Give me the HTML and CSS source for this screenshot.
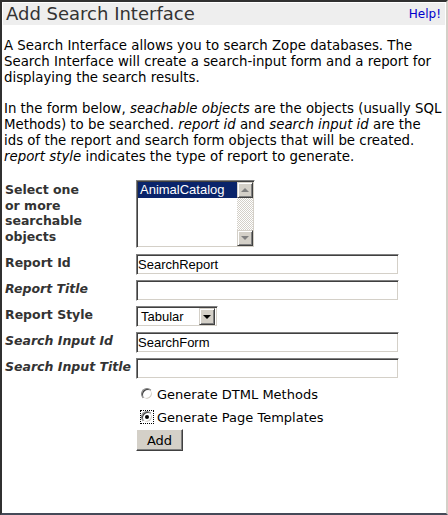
FILE: index.html
```html
<!DOCTYPE html>
<html>
<head>
<meta charset="utf-8">
<title>Add Search Interface</title>
<link rel="stylesheet" href="styles.css">
</head>
<body>
<div class="frame">
  <div class="titlebar">
    <span class="title">Add Search Interface</span>
    <a class="help" href="#">Help!</a>
  </div>
  <p class="intro">A Search Interface allows you to search Zope databases. The<br>Search Interface will create a search-input form and a report for<br>displaying the search results.</p>
  <p class="intro">In the form below, <em>seachable objects</em> are the objects (usually SQL<br>Methods) to be searched. <em>report id</em> and <em>search input id</em> are the<br>ids of the report and search form objects that will be created.<br><em>report style</em> indicates the type of report to generate.</p>
  <form class="form">
    <div class="label top">Select one<br>or more<br>searchable<br>objects</div>
    <div class="listbox">
      <div class="options"><div class="option sel">AnimalCatalog</div></div>
      <div class="vscroll">
        <div class="sbtn"><span class="arr up"></span></div>
        <div class="track"></div>
        <div class="sbtn"><span class="arr down"></span></div>
      </div>
    </div>

    <div class="label">Report Id</div>
    <input class="field" type="text" value="SearchReport">

    <div class="label opt">Report Title</div>
    <input class="field" type="text" value="">

    <div class="label">Report Style</div>
    <div class="dropdown"><span class="dd-text">Tabular</span><span class="dd-btn"><span class="arr down dark"></span></span></div>

    <div class="label opt">Search Input Id</div>
    <input class="field" type="text" value="SearchForm">

    <div class="label opt">Search Input Title</div>
    <input class="field" type="text" value="">

    <div class="choices">
      <div class="choice"><span class="rwrap"><span class="radio"></span></span><span>Generate DTML Methods</span></div>
      <div class="choice"><span class="rwrap focus"><span class="radio on"></span></span><span>Generate Page Templates</span></div>
      <div class="add">Add</div>
    </div>
  </form>
</div>
</body>
</html>
```

FILE: styles.css
```css
* { box-sizing: border-box; }
html, body { margin: 0; padding: 0; background: #fff; }
body {
  font-family: "DejaVu Sans", Verdana, sans-serif;
  font-size: 13.33px;
  color: #000;
}
.frame {
  height: 515px;
  border-style: solid;
  border-width: 2px;
  border-color: #303030 #d4d0c8 #454a58 #303030;
  padding: 1px;
  overflow: hidden;
}
.titlebar {
  display: flex;
  justify-content: space-between;
  align-items: flex-start;
  height: 22px;
  background: #eeeeee;
  padding: 0 4px 0 3px;
}
.title {
  font-size: 18px;
  line-height: 22px;
  color: #333;
}
.help {
  font-size: 12px;
  line-height: 15px;
  margin-top: 4px;
  color: #0000cc;
  text-decoration: none;
}
.intro {
  margin: 13px 0 0;
  padding: 0 0 0 1px;
  line-height: 16px;
  white-space: nowrap;
}
.intro + .intro { margin-top: 15px; }
.intro em { font-style: italic; }

.form {
  margin: 15px 0 0;
  padding-left: 2px;
  display: grid;
  grid-template-columns: 131px 263px;
  row-gap: 5px;
  align-items: center;
}
.label {
  font-weight: bold;
  font-size: 12.5px;
  line-height: 15.7px;
  color: #333;
  white-space: nowrap;
  padding-bottom: 3px;
}
.label.top { align-self: start; padding-top: 2px; padding-bottom: 0; }
.label.opt { font-style: italic; }

.field {
  display: block;
  width: 263px;
  height: 21px;
  margin: 0;
  padding: 0 1px;
  border: 1px solid;
  border-color: #808080 #fff #fff #808080;
  box-shadow: inset 1px 1px #404040, inset -1px -1px #d4d0c8;
  background: #fff;
  font: 13px "Liberation Sans", Arial, sans-serif;
  color: #000;
  outline: none;
}

.listbox {
  width: 119px;
  height: 68px;
  margin-bottom: 1px;
  border: 1px solid;
  border-color: #808080 #fff #fff #808080;
  box-shadow: inset 1px 1px #404040, inset -1px -1px #d4d0c8;
  padding: 1px;
  display: flex;
  background: #fff;
}
.options { flex: 1; }
.option {
  font: 13px "Liberation Sans", Arial, sans-serif;
  line-height: 16px;
  padding-left: 2px;
}
.option.sel { background: #0a246a; color: #fff; }
.vscroll {
  width: 16px;
  display: flex;
  flex-direction: column;
}
.track {
  flex: 1;
  background: repeating-conic-gradient(#d4d0c8 0 25%, #fff 0 50%) 0 0 / 2px 2px;
}
.sbtn, .dd-btn {
  width: 16px;
  height: 16px;
  background: #d4d0c8;
  border: 1px solid;
  border-color: #d4d0c8 #404040 #404040 #d4d0c8;
  box-shadow: inset 1px 1px #fff, inset -1px -1px #808080;
  display: flex;
  align-items: center;
  justify-content: center;
}
.arr {
  width: 0;
  height: 0;
  border-left: 4px solid transparent;
  border-right: 4px solid transparent;
}
.arr.up { border-bottom: 4px solid #808080; }
.arr.down { border-top: 4px solid #808080; }
.arr.down.dark { border-top-color: #000; }

.dropdown {
  width: 82px;
  height: 21px;
  border: 1px solid;
  border-color: #808080 #fff #fff #808080;
  box-shadow: inset 1px 1px #404040, inset -1px -1px #d4d0c8;
  padding: 2px 2px 2px 4px;
  display: flex;
  align-items: center;
  justify-content: space-between;
  font: 13px "Liberation Sans", Arial, sans-serif;
  background: #fff;
}
.dd-btn { height: 17px; }

.choices {
  grid-column: 2;
  display: flex;
  flex-direction: column;
  align-items: flex-start;
}
.choice {
  display: flex;
  align-items: center;
  height: 20px;
  padding-left: 4px;
  gap: 3px;
  font-size: 13px;
  color: #000;
}
.choice + .choice { margin-top: 3px; }
.rwrap {
  width: 14px;
  height: 14px;
  border: 1px dotted transparent;
  display: flex;
  align-items: center;
  justify-content: center;
}
.rwrap.focus { border-color: #000; }
.radio {
  width: 12px;
  height: 12px;
  flex: none;
  border-radius: 50%;
  border: 1px solid;
  border-color: #808080 #fff #fff #808080;
  box-shadow: inset 1px 1px #404040, inset -1px -1px #d4d0c8;
  background: #fff;
  display: flex;
  align-items: center;
  justify-content: center;
}
.radio.on::after {
  content: "";
  width: 4px;
  height: 4px;
  border-radius: 50%;
  background: #000;
}
.add {
  margin-top: 2px;
  width: 47px;
  height: 22px;
  background: #d4d0c8;
  border: 1px solid;
  border-color: #fff #404040 #404040 #fff;
  box-shadow: inset -1px -1px #808080;
  font-size: 13px;
  display: flex;
  align-items: center;
  justify-content: center;
  color: #000;
}
```
